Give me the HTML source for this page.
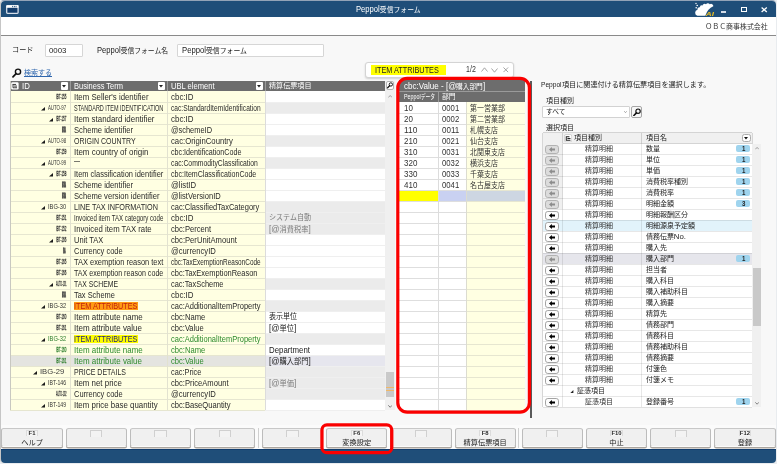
<!DOCTYPE html>
<html lang="ja"><head><meta charset="utf-8"><title>Peppol受信フォーム</title>
<style>
html,body{margin:0;padding:0}
body{width:777px;height:464px;position:relative;overflow:hidden;background:#e9ecef;font-family:"Liberation Sans","Noto Sans CJK JP",sans-serif;}
div,span.t,svg.a{position:absolute}
span.t{white-space:nowrap;display:block}
span.t b{font-weight:normal;font-size:112%}
#w{left:0;top:0;width:777px;height:464px;will-change:transform}
.win{left:0;top:0;width:776px;height:463px;background:#f8f8f8;border-radius:4px;box-sizing:border-box;border-left:1px solid #c6c6c6;border-top:1px solid #93a3b7}
</style></head>
<body>
<div id="w">
<div class="win"></div>
<div style="left:1px;top:0.5px;width:775px;height:16.5px;background:#1f4e79;border-radius:4px 4px 0 0;"></div>
<span class="t" style="left:356.1px;transform-origin:0 50%;top:4.9px;font-size:7.4px;line-height:10px;color:#fff;transform:scaleX(0.9245);"><b>Peppol</b>受信フォーム</span>
<svg class="a" style="left:6.2px;top:5.4px" width="12.8" height="9" viewBox="0 0 12.8 9"><rect x=".7" y=".7" width="11.4" height="7.6" rx=".8" fill="#123c6c" stroke="#d4dde8" stroke-width="1.3"/><rect x=".4" y=".3" width="12" height="2.5" fill="#fff"/><rect x="6.2" y=".9" width=".9" height="1.3" fill="#1f4e79"/><rect x="7.9" y=".9" width=".9" height="1.3" fill="#1f4e79"/><rect x="9.6" y=".9" width=".9" height="1.3" fill="#1f4e79"/></svg>
<svg class="a" style="left:694px;top:2px" width="22" height="15" viewBox="0 0 22 15"><path d="M3.4 13.7 A3.1 3.1 0 0 1 3.5 7.7 A2 2 0 0 1 5.9 5.3 A2 2 0 0 1 8.5 3.5 A2.3 2.3 0 0 1 12 2.2 A2.4 2.4 0 0 1 15.8 2.3 A2.2 2.2 0 0 1 19.3 4.2 Q13.6 6.6 11.3 13.7 Z" fill="#fff"/><circle cx="2" cy="1.5" r=".7" fill="#fff"/><circle cx="3.2" cy="3.5" r=".8" fill="#fff"/><circle cx="2.2" cy="5.7" r=".8" fill="#fff"/><text x="11.8" y="13.7" textLength="8.2" lengthAdjust="spacingAndGlyphs" font-family='"Liberation Sans",sans-serif' font-size="5.8" font-weight="bold" font-style="italic" fill="#f0c020">AI</text></svg>
<div style="left:721.4px;top:11.1px;width:4.4px;height:1.7px;background:#d4dde8;"></div>
<div style="left:741px;top:7.3px;width:6.2px;height:5.2px;border:1px solid #fff;border-top-width:1.8px;box-sizing:border-box;"></div>
<svg class="a" style="left:761.3px;top:7.4px" width="6.4" height="5.6" viewBox="0 0 6.4 5.6"><path d="M.6 .5 L5.8 5.1 M5.8 .5 L.6 5.1" stroke="#fff" stroke-width="1.3" fill="none"/></svg>
<div style="left:1px;top:17px;width:775px;height:18px;background:#fff;"></div>
<div style="left:1px;top:34.6px;width:775px;height:1px;background:#8a8a8a;"></div>
<span class="t" style="right:9px;transform-origin:100% 50%;top:22px;font-size:7.2px;line-height:10px;color:#333;transform:scaleX(0.9644);">ＯＢＣ商事株式会社</span>
<span class="t" style="left:12px;transform-origin:0 50%;top:45px;font-size:7.4px;line-height:10px;color:#222;transform:scaleX(0.9690);">コード</span>
<div style="left:45px;top:44.4px;width:38.2px;height:12.2px;background:#fff;border:1px solid #d6d6d6;box-sizing:border-box;border-radius:1px;"></div>
<span class="t" style="left:49px;transform-origin:0 50%;top:45.6px;font-size:7.6px;line-height:10px;color:#222;transform:scaleX(1.0351);">0003</span>
<span class="t" style="left:96.8px;transform-origin:0 50%;top:45.8px;font-size:7.4px;line-height:10px;color:#222;transform:scaleX(0.9189);"><b>Peppol</b>受信フォーム名</span>
<div style="left:177px;top:44.4px;width:146.6px;height:12.2px;background:#fff;border:1px solid #d6d6d6;box-sizing:border-box;border-radius:1px;"></div>
<span class="t" style="left:181.5px;transform-origin:0 50%;top:45.6px;font-size:7.4px;line-height:10px;color:#222;transform:scaleX(0.9302);"><b>Peppol</b>受信フォーム</span>
<svg class="a" style="left:11.5px;top:67.5px" width="10" height="10" viewBox="0 0 10 10"><circle cx="6" cy="3.7" r="2.6" fill="none" stroke="#111" stroke-width="1.4"/><path d="M4.1 5.7 L1 8.9" stroke="#111" stroke-width="1.7" stroke-linecap="round"/></svg>
<span class="t" style="left:24px;transform-origin:0 50%;top:67.6px;font-size:7.2px;line-height:10px;color:#2f66ad;text-decoration:underline;text-decoration-thickness:.6px;text-underline-offset:1px;transform:scaleX(0.9734);">検索する</span>
<div style="left:10.4px;top:91.3px;width:254.9px;height:319px;background:#ffffe2;"></div>
<div style="left:265.3px;top:91.3px;width:119.7px;height:319px;background:#fff;"></div>
<div style="left:10.4px;top:80.7px;width:374.6px;height:10.6px;background:#6d6d6d;"></div>
<div style="left:69.8px;top:80.7px;width:0.8px;height:10.6px;background:#9a9a9a;"></div>
<div style="left:167.3px;top:80.7px;width:0.8px;height:10.6px;background:#9a9a9a;"></div>
<div style="left:264.9px;top:80.7px;width:0.8px;height:10.6px;background:#9a9a9a;"></div>
<svg class="a" style="left:11.4px;top:82.2px" width="7.8" height="7.8" viewBox="0 0 8 8"><rect x=".2" y=".2" width="7.6" height="7.6" rx="1.4" fill="#fff"/><path d="M1.6 2.5h3.6M3.2 4.2h3M3.2 5.9h3M2.1 2.5v3.4h1.1" stroke="#333" stroke-width="1" fill="none"/></svg>
<span class="t" style="left:21.6px;transform-origin:0 50%;top:81.7px;font-size:8.2px;line-height:10px;color:#fff;transform:scaleX(0.9527);">ID</span>
<span class="t" style="left:74px;transform-origin:0 50%;top:81.7px;font-size:8.2px;line-height:10px;color:#fff;transform:scaleX(0.9151);">Business Term</span>
<span class="t" style="left:171.4px;transform-origin:0 50%;top:81.7px;font-size:8.2px;line-height:10px;color:#fff;transform:scaleX(0.9249);">UBL element</span>
<span class="t" style="left:268.7px;transform-origin:0 50%;top:81.4px;font-size:7.2px;line-height:10px;color:#fff;transform:scaleX(0.9852);">精算伝票項目</span>
<div style="left:60.6px;top:82.3px;width:7.2px;height:7.6px;background:#fff;border-radius:1px;"></div>
<svg class="a" style="left:62.2px;top:85px" width="4" height="2.6" viewBox="0 0 4 2.6"><path d="M0 0h4L2 2.6z" fill="#222"/></svg>
<div style="left:157.6px;top:82.3px;width:7.2px;height:7.6px;background:#fff;border-radius:1px;"></div>
<svg class="a" style="left:159.2px;top:85px" width="4" height="2.6" viewBox="0 0 4 2.6"><path d="M0 0h4L2 2.6z" fill="#222"/></svg>
<div style="left:255.8px;top:82.3px;width:7.2px;height:7.6px;background:#fff;border-radius:1px;"></div>
<svg class="a" style="left:257.4px;top:85px" width="4" height="2.6" viewBox="0 0 4 2.6"><path d="M0 0h4L2 2.6z" fill="#222"/></svg>
<span class="t" style="left:55.6px;transform-origin:0 50%;top:92.4px;font-size:8px;line-height:10px;color:#333;-webkit-text-stroke:.3px #333;transform:scaleX(0.3712);">IBT-155</span>
<span class="t" style="left:74.2px;transform-origin:0 50%;top:92.8px;font-size:8.2px;line-height:10px;color:#2a2a2a;transform:scaleX(0.9549);">Item Seller&#x27;s identifier</span>
<span class="t" style="left:171.4px;transform-origin:0 50%;top:92.8px;font-size:8.2px;line-height:10px;color:#2a2a2a;transform:scaleX(0.9690);">cbc:ID</span>
<div style="left:265.3px;top:102.3px;width:119.7px;height:11px;background:#ebebeb;"></div>
<span class="t" style="left:47.9px;transform-origin:0 50%;top:103.4px;font-size:8px;line-height:10px;color:#333;transform:scaleX(0.5380);">AUTO-97</span>
<svg class="a" style="left:40.9px;top:107.1px" width="4" height="3.6" viewBox="0 0 4 3.6"><path d="M4 0V3.6H0z" fill="#1a1a1a"/></svg>
<span class="t" style="left:74.2px;transform-origin:0 50%;top:103.8px;font-size:8.2px;line-height:10px;color:#2a2a2a;transform:scaleX(0.6715);">STANDARD ITEM IDENTIFICATION</span>
<span class="t" style="left:171.4px;transform-origin:0 50%;top:103.8px;font-size:8.2px;line-height:10px;color:#2a2a2a;transform:scaleX(0.8135);">cac:StandardItemIdentification</span>
<span class="t" style="left:55.6px;transform-origin:0 50%;top:114.4px;font-size:8px;line-height:10px;color:#333;-webkit-text-stroke:.3px #333;transform:scaleX(0.3712);">IBT-157</span>
<svg class="a" style="left:48.5px;top:118.1px" width="4" height="3.6" viewBox="0 0 4 3.6"><path d="M4 0V3.6H0z" fill="#1a1a1a"/></svg>
<span class="t" style="left:74.2px;transform-origin:0 50%;top:114.8px;font-size:8.2px;line-height:10px;color:#2a2a2a;transform:scaleX(0.9664);">Item standard identifier</span>
<span class="t" style="left:171.4px;transform-origin:0 50%;top:114.8px;font-size:8.2px;line-height:10px;color:#2a2a2a;transform:scaleX(0.9690);">cbc:ID</span>
<span class="t" style="left:62px;transform-origin:0 50%;top:125.4px;font-size:8px;line-height:10px;color:#333;font-weight:bold;-webkit-text-stroke:1.4px #444;transform:scaleX(0.1124);">IBT-157-1</span>
<span class="t" style="left:74.2px;transform-origin:0 50%;top:125.8px;font-size:8.2px;line-height:10px;color:#2a2a2a;transform:scaleX(0.9326);">Scheme identifier</span>
<span class="t" style="left:171.4px;transform-origin:0 50%;top:125.8px;font-size:8.2px;line-height:10px;color:#2a2a2a;transform:scaleX(0.9076);">@schemeID</span>
<div style="left:265.3px;top:135.3px;width:119.7px;height:11px;background:#ebebeb;"></div>
<span class="t" style="left:47.9px;transform-origin:0 50%;top:136.4px;font-size:8px;line-height:10px;color:#333;transform:scaleX(0.5380);">AUTO-98</span>
<svg class="a" style="left:40.9px;top:140.1px" width="4" height="3.6" viewBox="0 0 4 3.6"><path d="M4 0V3.6H0z" fill="#1a1a1a"/></svg>
<span class="t" style="left:74.2px;transform-origin:0 50%;top:136.8px;font-size:8.2px;line-height:10px;color:#2a2a2a;transform:scaleX(0.8587);">ORIGIN COUNTRY</span>
<span class="t" style="left:171.4px;transform-origin:0 50%;top:136.8px;font-size:8.2px;line-height:10px;color:#2a2a2a;transform:scaleX(0.9431);">cac:OriginCountry</span>
<span class="t" style="left:55.6px;transform-origin:0 50%;top:147.4px;font-size:8px;line-height:10px;color:#333;-webkit-text-stroke:.3px #333;transform:scaleX(0.3712);">IBT-159</span>
<span class="t" style="left:74.2px;transform-origin:0 50%;top:147.8px;font-size:8.2px;line-height:10px;color:#2a2a2a;transform:scaleX(0.9745);">Item country of origin</span>
<span class="t" style="left:171.4px;transform-origin:0 50%;top:147.8px;font-size:8.2px;line-height:10px;color:#2a2a2a;transform:scaleX(0.8739);">cbc:IdentificationCode</span>
<div style="left:265.3px;top:157.3px;width:119.7px;height:11px;background:#ebebeb;"></div>
<span class="t" style="left:47.9px;transform-origin:0 50%;top:158.4px;font-size:8px;line-height:10px;color:#333;transform:scaleX(0.5380);">AUTO-99</span>
<svg class="a" style="left:40.9px;top:162.1px" width="4" height="3.6" viewBox="0 0 4 3.6"><path d="M4 0V3.6H0z" fill="#1a1a1a"/></svg>
<span class="t" style="left:74.2px;transform-origin:0 50%;top:156.8px;font-size:8.2px;line-height:10px;color:#2a2a2a;transform:scaleX(0.7328);">—</span>
<span class="t" style="left:171.4px;transform-origin:0 50%;top:158.8px;font-size:8.2px;line-height:10px;color:#2a2a2a;transform:scaleX(0.8294);">cac:CommodityClassification</span>
<span class="t" style="left:55.6px;transform-origin:0 50%;top:169.4px;font-size:8px;line-height:10px;color:#333;-webkit-text-stroke:.3px #333;transform:scaleX(0.3712);">IBT-158</span>
<svg class="a" style="left:48.5px;top:173.1px" width="4" height="3.6" viewBox="0 0 4 3.6"><path d="M4 0V3.6H0z" fill="#1a1a1a"/></svg>
<span class="t" style="left:74.2px;transform-origin:0 50%;top:169.8px;font-size:8.2px;line-height:10px;color:#2a2a2a;transform:scaleX(0.9127);">Item classification identifier</span>
<span class="t" style="left:171.4px;transform-origin:0 50%;top:169.8px;font-size:8.2px;line-height:10px;color:#2a2a2a;transform:scaleX(0.8638);">cbc:ItemClassificationCode</span>
<span class="t" style="left:62px;transform-origin:0 50%;top:180.4px;font-size:8px;line-height:10px;color:#333;font-weight:bold;-webkit-text-stroke:1.4px #444;transform:scaleX(0.1124);">IBT-158-1</span>
<span class="t" style="left:74.2px;transform-origin:0 50%;top:180.8px;font-size:8.2px;line-height:10px;color:#2a2a2a;transform:scaleX(0.9326);">Scheme identifier</span>
<span class="t" style="left:171.4px;transform-origin:0 50%;top:180.8px;font-size:8.2px;line-height:10px;color:#2a2a2a;transform:scaleX(0.9428);">@listID</span>
<span class="t" style="left:62px;transform-origin:0 50%;top:191.4px;font-size:8px;line-height:10px;color:#333;font-weight:bold;-webkit-text-stroke:1.4px #444;transform:scaleX(0.1124);">IBT-158-2</span>
<span class="t" style="left:74.2px;transform-origin:0 50%;top:191.8px;font-size:8.2px;line-height:10px;color:#2a2a2a;transform:scaleX(0.9311);">Scheme version identifier</span>
<span class="t" style="left:171.4px;transform-origin:0 50%;top:191.8px;font-size:8.2px;line-height:10px;color:#2a2a2a;transform:scaleX(0.9233);">@listVersionID</span>
<div style="left:265.3px;top:201.3px;width:119.7px;height:11px;background:#ebebeb;"></div>
<span class="t" style="left:47.9px;transform-origin:0 50%;top:202.4px;font-size:8px;line-height:10px;color:#333;transform:scaleX(0.7142);">IBG-30</span>
<svg class="a" style="left:40.9px;top:206.1px" width="4" height="3.6" viewBox="0 0 4 3.6"><path d="M4 0V3.6H0z" fill="#1a1a1a"/></svg>
<span class="t" style="left:74.2px;transform-origin:0 50%;top:202.8px;font-size:8.2px;line-height:10px;color:#2a2a2a;transform:scaleX(0.8877);">LINE TAX INFORMATION</span>
<span class="t" style="left:171.4px;transform-origin:0 50%;top:202.8px;font-size:8.2px;line-height:10px;color:#2a2a2a;transform:scaleX(0.9152);">cac:ClassifiedTaxCategory</span>
<div style="left:265.3px;top:212.3px;width:119.7px;height:11px;background:#ebebeb;"></div>
<span class="t" style="left:55.6px;transform-origin:0 50%;top:213.4px;font-size:8px;line-height:10px;color:#333;-webkit-text-stroke:.3px #333;transform:scaleX(0.3712);">IBT-151</span>
<span class="t" style="left:74.2px;transform-origin:0 50%;top:213.8px;font-size:8.2px;line-height:10px;color:#2a2a2a;transform:scaleX(0.7480);">Invoiced item TAX category code</span>
<span class="t" style="left:171.4px;transform-origin:0 50%;top:213.8px;font-size:8.2px;line-height:10px;color:#2a2a2a;transform:scaleX(0.9690);">cbc:ID</span>
<span class="t" style="left:268.7px;transform-origin:0 50%;top:213px;font-size:7.5px;line-height:10px;color:#7c7c7c;transform:scaleX(0.9379);">システム自動</span>
<div style="left:265.3px;top:223.3px;width:119.7px;height:11px;background:#ebebeb;"></div>
<span class="t" style="left:55.6px;transform-origin:0 50%;top:224.4px;font-size:8px;line-height:10px;color:#333;-webkit-text-stroke:.3px #333;transform:scaleX(0.3712);">IBT-152</span>
<span class="t" style="left:74.2px;transform-origin:0 50%;top:224.8px;font-size:8.2px;line-height:10px;color:#2a2a2a;transform:scaleX(0.9456);">Invoiced item TAX rate</span>
<span class="t" style="left:171.4px;transform-origin:0 50%;top:224.8px;font-size:8.2px;line-height:10px;color:#2a2a2a;transform:scaleX(0.9298);">cbc:Percent</span>
<span class="t" style="left:268.7px;transform-origin:0 50%;top:224px;font-size:7.5px;line-height:10px;color:#7c7c7c;transform:scaleX(0.9659);"><b>[@</b>消費税率<b>]</b></span>
<span class="t" style="left:55.6px;transform-origin:0 50%;top:235.4px;font-size:8px;line-height:10px;color:#333;-webkit-text-stroke:.3px #333;transform:scaleX(0.3712);">IBT-166</span>
<svg class="a" style="left:48.5px;top:239.1px" width="4" height="3.6" viewBox="0 0 4 3.6"><path d="M4 0V3.6H0z" fill="#1a1a1a"/></svg>
<span class="t" style="left:74.2px;transform-origin:0 50%;top:235.8px;font-size:8.2px;line-height:10px;color:#2a2a2a;transform:scaleX(0.9121);">Unit TAX</span>
<span class="t" style="left:171.4px;transform-origin:0 50%;top:235.8px;font-size:8.2px;line-height:10px;color:#2a2a2a;transform:scaleX(0.9327);">cbc:PerUnitAmount</span>
<span class="t" style="left:63.4px;transform-origin:0 50%;top:246.4px;font-size:8px;line-height:10px;color:#333;font-weight:bold;-webkit-text-stroke:1.4px #444;transform:scaleX(0.0731);">IBT-166-1</span>
<span class="t" style="left:74.2px;transform-origin:0 50%;top:246.8px;font-size:8.2px;line-height:10px;color:#2a2a2a;transform:scaleX(0.9127);">Currency code</span>
<span class="t" style="left:171.4px;transform-origin:0 50%;top:246.8px;font-size:8.2px;line-height:10px;color:#2a2a2a;transform:scaleX(0.9352);">@currencyID</span>
<span class="t" style="left:55.6px;transform-origin:0 50%;top:257.4px;font-size:8px;line-height:10px;color:#333;-webkit-text-stroke:.3px #333;transform:scaleX(0.3712);">IBT-165</span>
<span class="t" style="left:74.2px;transform-origin:0 50%;top:257.8px;font-size:8.2px;line-height:10px;color:#2a2a2a;transform:scaleX(0.9098);">TAX exemption reason text</span>
<span class="t" style="left:171.4px;transform-origin:0 50%;top:257.8px;font-size:8.2px;line-height:10px;color:#2a2a2a;transform:scaleX(0.7844);">cbc:TaxExemptionReasonCode</span>
<span class="t" style="left:55.6px;transform-origin:0 50%;top:268.4px;font-size:8px;line-height:10px;color:#333;-webkit-text-stroke:.3px #333;transform:scaleX(0.3712);">IBT-166</span>
<span class="t" style="left:74.2px;transform-origin:0 50%;top:268.8px;font-size:8.2px;line-height:10px;color:#2a2a2a;transform:scaleX(0.8695);">TAX exemption reason code</span>
<span class="t" style="left:171.4px;transform-origin:0 50%;top:268.8px;font-size:8.2px;line-height:10px;color:#2a2a2a;transform:scaleX(0.9137);">cbc:TaxExemptionReason</span>
<div style="left:265.3px;top:278.3px;width:119.7px;height:11px;background:#ebebeb;"></div>
<span class="t" style="left:55.6px;transform-origin:0 50%;top:279.4px;font-size:8px;line-height:10px;color:#333;-webkit-text-stroke:.3px #333;transform:scaleX(0.2730);">AUTO-101</span>
<svg class="a" style="left:48.5px;top:283.1px" width="4" height="3.6" viewBox="0 0 4 3.6"><path d="M4 0V3.6H0z" fill="#1a1a1a"/></svg>
<span class="t" style="left:74.2px;transform-origin:0 50%;top:279.8px;font-size:8.2px;line-height:10px;color:#2a2a2a;transform:scaleX(0.8361);">TAX SCHEME</span>
<span class="t" style="left:171.4px;transform-origin:0 50%;top:279.8px;font-size:8.2px;line-height:10px;color:#2a2a2a;transform:scaleX(0.9084);">cac:TaxScheme</span>
<span class="t" style="left:62px;transform-origin:0 50%;top:290.4px;font-size:8px;line-height:10px;color:#333;font-weight:bold;-webkit-text-stroke:1.4px #444;transform:scaleX(0.1124);">IBT-167-1</span>
<span class="t" style="left:74.2px;transform-origin:0 50%;top:290.8px;font-size:8.2px;line-height:10px;color:#2a2a2a;transform:scaleX(0.9076);">Tax Scheme</span>
<span class="t" style="left:171.4px;transform-origin:0 50%;top:290.8px;font-size:8.2px;line-height:10px;color:#2a2a2a;transform:scaleX(0.9690);">cbc:ID</span>
<div style="left:265.3px;top:300.3px;width:119.7px;height:11px;background:#ebebeb;"></div>
<span class="t" style="left:47.9px;transform-origin:0 50%;top:301.4px;font-size:8px;line-height:10px;color:#333;transform:scaleX(0.7142);">IBG-32</span>
<svg class="a" style="left:40.9px;top:305.1px" width="4" height="3.6" viewBox="0 0 4 3.6"><path d="M4 0V3.6H0z" fill="#1a1a1a"/></svg>
<div style="left:74px;top:301.5px;width:63.6px;height:8.8px;background:#ff9a14;"></div>
<span class="t" style="left:74.2px;transform-origin:0 50%;top:301.8px;font-size:8.2px;line-height:10px;color:#c2200c;transform:scaleX(0.8838);">ITEM ATTRIBUTES</span>
<span class="t" style="left:171.4px;transform-origin:0 50%;top:301.8px;font-size:8.2px;line-height:10px;color:#2a2a2a;transform:scaleX(0.9157);">cac:AdditionalItemProperty</span>
<span class="t" style="left:55.6px;transform-origin:0 50%;top:312.4px;font-size:8px;line-height:10px;color:#333;-webkit-text-stroke:.3px #333;transform:scaleX(0.3712);">IBT-160</span>
<span class="t" style="left:74.2px;transform-origin:0 50%;top:312.8px;font-size:8.2px;line-height:10px;color:#2a2a2a;transform:scaleX(0.9752);">Item attribute name</span>
<span class="t" style="left:171.4px;transform-origin:0 50%;top:312.8px;font-size:8.2px;line-height:10px;color:#2a2a2a;transform:scaleX(0.9306);">cbc:Name</span>
<span class="t" style="left:268.7px;transform-origin:0 50%;top:312px;font-size:7.5px;line-height:10px;color:#222;transform:scaleX(0.9367);">表示単位</span>
<span class="t" style="left:55.6px;transform-origin:0 50%;top:323.4px;font-size:8px;line-height:10px;color:#333;-webkit-text-stroke:.3px #333;transform:scaleX(0.3712);">IBT-161</span>
<span class="t" style="left:74.2px;transform-origin:0 50%;top:323.8px;font-size:8.2px;line-height:10px;color:#2a2a2a;transform:scaleX(0.9764);">Item attribute value</span>
<span class="t" style="left:171.4px;transform-origin:0 50%;top:323.8px;font-size:8.2px;line-height:10px;color:#2a2a2a;transform:scaleX(0.9248);">cbc:Value</span>
<span class="t" style="left:268.7px;transform-origin:0 50%;top:323px;font-size:7.5px;line-height:10px;color:#222;transform:scaleX(0.9655);"><b>[@</b>単位<b>]</b></span>
<div style="left:265.3px;top:333.3px;width:119.7px;height:11px;background:#ebebeb;"></div>
<span class="t" style="left:47.9px;transform-origin:0 50%;top:334.4px;font-size:8px;line-height:10px;color:#2c7c2c;transform:scaleX(0.7142);">IBG-32</span>
<svg class="a" style="left:40.9px;top:338.1px" width="4" height="3.6" viewBox="0 0 4 3.6"><path d="M4 0V3.6H0z" fill="#1a1a1a"/></svg>
<div style="left:74px;top:334.5px;width:63.6px;height:8.8px;background:#ffff00;"></div>
<span class="t" style="left:74.2px;transform-origin:0 50%;top:334.8px;font-size:8.2px;line-height:10px;color:#1c1c80;transform:scaleX(0.8838);">ITEM ATTRIBUTES</span>
<span class="t" style="left:171.4px;transform-origin:0 50%;top:334.8px;font-size:8.2px;line-height:10px;color:#2e8b2e;transform:scaleX(0.9157);">cac:AdditionalItemProperty</span>
<span class="t" style="left:55.6px;transform-origin:0 50%;top:345.4px;font-size:8px;line-height:10px;color:#2c7c2c;-webkit-text-stroke:.3px #2c7c2c;transform:scaleX(0.3712);">IBT-160</span>
<span class="t" style="left:74.2px;transform-origin:0 50%;top:345.8px;font-size:8.2px;line-height:10px;color:#2e8b2e;transform:scaleX(0.9752);">Item attribute name</span>
<span class="t" style="left:171.4px;transform-origin:0 50%;top:345.8px;font-size:8.2px;line-height:10px;color:#2e8b2e;transform:scaleX(0.9306);">cbc:Name</span>
<span class="t" style="left:268.7px;transform-origin:0 50%;top:345.8px;font-size:8.2px;line-height:10px;color:#222;transform:scaleX(0.9584);">Department</span>
<div style="left:10.4px;top:355.3px;width:254.9px;height:11px;background:#e4e4e0;"></div>
<div style="left:265.3px;top:355.3px;width:119.7px;height:11px;background:#e6e6ee;"></div>
<span class="t" style="left:55.6px;transform-origin:0 50%;top:356.4px;font-size:8px;line-height:10px;color:#2c7c2c;-webkit-text-stroke:.3px #2c7c2c;transform:scaleX(0.3712);">IBT-161</span>
<span class="t" style="left:74.2px;transform-origin:0 50%;top:356.8px;font-size:8.2px;line-height:10px;color:#2e8b2e;transform:scaleX(0.9764);">Item attribute value</span>
<span class="t" style="left:171.4px;transform-origin:0 50%;top:356.8px;font-size:8.2px;line-height:10px;color:#2e8b2e;transform:scaleX(0.9248);">cbc:Value</span>
<span class="t" style="left:268.7px;transform-origin:0 50%;top:356px;font-size:7.5px;line-height:10px;color:#222;transform:scaleX(0.9659);"><b>[@</b>購入部門<b>]</b></span>
<div style="left:265.3px;top:366.3px;width:119.7px;height:11px;background:#ebebeb;"></div>
<span class="t" style="left:40px;transform-origin:0 50%;top:367.4px;font-size:8px;line-height:10px;color:#3a3a3a;transform:scaleX(0.9549);">IBG-29</span>
<svg class="a" style="left:33.1px;top:371.1px" width="4" height="3.6" viewBox="0 0 4 3.6"><path d="M4 0V3.6H0z" fill="#1a1a1a"/></svg>
<span class="t" style="left:74.2px;transform-origin:0 50%;top:367.8px;font-size:8.2px;line-height:10px;color:#2a2a2a;transform:scaleX(0.8549);">PRICE DETAILS</span>
<span class="t" style="left:171.4px;transform-origin:0 50%;top:367.8px;font-size:8.2px;line-height:10px;color:#2a2a2a;transform:scaleX(0.8999);">cac:Price</span>
<div style="left:265.3px;top:377.3px;width:119.7px;height:11px;background:#ebebeb;"></div>
<span class="t" style="left:47.9px;transform-origin:0 50%;top:378.4px;font-size:8px;line-height:10px;color:#333;transform:scaleX(0.6461);">IBT-146</span>
<svg class="a" style="left:40.9px;top:382.1px" width="4" height="3.6" viewBox="0 0 4 3.6"><path d="M4 0V3.6H0z" fill="#1a1a1a"/></svg>
<span class="t" style="left:74.2px;transform-origin:0 50%;top:378.8px;font-size:8.2px;line-height:10px;color:#2a2a2a;transform:scaleX(0.9655);">Item net price</span>
<span class="t" style="left:171.4px;transform-origin:0 50%;top:378.8px;font-size:8.2px;line-height:10px;color:#2a2a2a;transform:scaleX(0.9291);">cbc:PriceAmount</span>
<span class="t" style="left:268.7px;transform-origin:0 50%;top:378px;font-size:7.5px;line-height:10px;color:#7c7c7c;transform:scaleX(0.9655);"><b>[@</b>単価<b>]</b></span>
<div style="left:265.3px;top:388.3px;width:119.7px;height:11px;background:#ebebeb;"></div>
<span class="t" style="left:55.6px;transform-origin:0 50%;top:389.4px;font-size:8px;line-height:10px;color:#333;-webkit-text-stroke:.3px #333;transform:scaleX(0.2730);">AUTO-102</span>
<span class="t" style="left:74.2px;transform-origin:0 50%;top:389.8px;font-size:8.2px;line-height:10px;color:#2a2a2a;transform:scaleX(0.9127);">Currency code</span>
<span class="t" style="left:171.4px;transform-origin:0 50%;top:389.8px;font-size:8.2px;line-height:10px;color:#2a2a2a;transform:scaleX(0.9352);">@currencyID</span>
<span class="t" style="left:47.9px;transform-origin:0 50%;top:400.4px;font-size:8px;line-height:10px;color:#333;transform:scaleX(0.6461);">IBT-149</span>
<svg class="a" style="left:40.9px;top:404.1px" width="4" height="3.6" viewBox="0 0 4 3.6"><path d="M4 0V3.6H0z" fill="#1a1a1a"/></svg>
<span class="t" style="left:74.2px;transform-origin:0 50%;top:400.8px;font-size:8.2px;line-height:10px;color:#2a2a2a;transform:scaleX(0.9616);">Item price base quantity</span>
<span class="t" style="left:171.4px;transform-origin:0 50%;top:400.8px;font-size:8.2px;line-height:10px;color:#2a2a2a;transform:scaleX(0.9288);">cbc:BaseQuantity</span>
<div style="left:10.4px;top:101.8px;width:254.9px;height:1px;background:#e6e6d0;"></div>
<div style="left:265.3px;top:101.8px;width:119.7px;height:1px;background:#efefef;"></div>
<div style="left:10.4px;top:112.8px;width:254.9px;height:1px;background:#e6e6d0;"></div>
<div style="left:265.3px;top:112.8px;width:119.7px;height:1px;background:#efefef;"></div>
<div style="left:10.4px;top:123.8px;width:254.9px;height:1px;background:#e6e6d0;"></div>
<div style="left:265.3px;top:123.8px;width:119.7px;height:1px;background:#efefef;"></div>
<div style="left:10.4px;top:134.8px;width:254.9px;height:1px;background:#e6e6d0;"></div>
<div style="left:265.3px;top:134.8px;width:119.7px;height:1px;background:#efefef;"></div>
<div style="left:10.4px;top:145.8px;width:254.9px;height:1px;background:#e6e6d0;"></div>
<div style="left:265.3px;top:145.8px;width:119.7px;height:1px;background:#efefef;"></div>
<div style="left:10.4px;top:156.8px;width:254.9px;height:1px;background:#e6e6d0;"></div>
<div style="left:265.3px;top:156.8px;width:119.7px;height:1px;background:#efefef;"></div>
<div style="left:10.4px;top:167.8px;width:254.9px;height:1px;background:#e6e6d0;"></div>
<div style="left:265.3px;top:167.8px;width:119.7px;height:1px;background:#efefef;"></div>
<div style="left:10.4px;top:178.8px;width:254.9px;height:1px;background:#e6e6d0;"></div>
<div style="left:265.3px;top:178.8px;width:119.7px;height:1px;background:#efefef;"></div>
<div style="left:10.4px;top:189.8px;width:254.9px;height:1px;background:#e6e6d0;"></div>
<div style="left:265.3px;top:189.8px;width:119.7px;height:1px;background:#efefef;"></div>
<div style="left:10.4px;top:200.8px;width:254.9px;height:1px;background:#e6e6d0;"></div>
<div style="left:265.3px;top:200.8px;width:119.7px;height:1px;background:#efefef;"></div>
<div style="left:10.4px;top:211.8px;width:254.9px;height:1px;background:#e6e6d0;"></div>
<div style="left:265.3px;top:211.8px;width:119.7px;height:1px;background:#efefef;"></div>
<div style="left:10.4px;top:222.8px;width:254.9px;height:1px;background:#e6e6d0;"></div>
<div style="left:265.3px;top:222.8px;width:119.7px;height:1px;background:#efefef;"></div>
<div style="left:10.4px;top:233.8px;width:254.9px;height:1px;background:#e6e6d0;"></div>
<div style="left:265.3px;top:233.8px;width:119.7px;height:1px;background:#efefef;"></div>
<div style="left:10.4px;top:244.8px;width:254.9px;height:1px;background:#e6e6d0;"></div>
<div style="left:265.3px;top:244.8px;width:119.7px;height:1px;background:#efefef;"></div>
<div style="left:10.4px;top:255.8px;width:254.9px;height:1px;background:#e6e6d0;"></div>
<div style="left:265.3px;top:255.8px;width:119.7px;height:1px;background:#efefef;"></div>
<div style="left:10.4px;top:266.8px;width:254.9px;height:1px;background:#e6e6d0;"></div>
<div style="left:265.3px;top:266.8px;width:119.7px;height:1px;background:#efefef;"></div>
<div style="left:10.4px;top:277.8px;width:254.9px;height:1px;background:#e6e6d0;"></div>
<div style="left:265.3px;top:277.8px;width:119.7px;height:1px;background:#efefef;"></div>
<div style="left:10.4px;top:288.8px;width:254.9px;height:1px;background:#e6e6d0;"></div>
<div style="left:265.3px;top:288.8px;width:119.7px;height:1px;background:#efefef;"></div>
<div style="left:10.4px;top:299.8px;width:254.9px;height:1px;background:#e6e6d0;"></div>
<div style="left:265.3px;top:299.8px;width:119.7px;height:1px;background:#efefef;"></div>
<div style="left:10.4px;top:310.8px;width:254.9px;height:1px;background:#e6e6d0;"></div>
<div style="left:265.3px;top:310.8px;width:119.7px;height:1px;background:#efefef;"></div>
<div style="left:10.4px;top:321.8px;width:254.9px;height:1px;background:#e6e6d0;"></div>
<div style="left:265.3px;top:321.8px;width:119.7px;height:1px;background:#efefef;"></div>
<div style="left:10.4px;top:332.8px;width:254.9px;height:1px;background:#e6e6d0;"></div>
<div style="left:265.3px;top:332.8px;width:119.7px;height:1px;background:#efefef;"></div>
<div style="left:10.4px;top:343.8px;width:254.9px;height:1px;background:#e6e6d0;"></div>
<div style="left:265.3px;top:343.8px;width:119.7px;height:1px;background:#efefef;"></div>
<div style="left:10.4px;top:354.8px;width:254.9px;height:1px;background:#e6e6d0;"></div>
<div style="left:265.3px;top:354.8px;width:119.7px;height:1px;background:#efefef;"></div>
<div style="left:10.4px;top:365.8px;width:254.9px;height:1px;background:#e6e6d0;"></div>
<div style="left:265.3px;top:365.8px;width:119.7px;height:1px;background:#efefef;"></div>
<div style="left:10.4px;top:376.8px;width:254.9px;height:1px;background:#e6e6d0;"></div>
<div style="left:265.3px;top:376.8px;width:119.7px;height:1px;background:#efefef;"></div>
<div style="left:10.4px;top:387.8px;width:254.9px;height:1px;background:#e6e6d0;"></div>
<div style="left:265.3px;top:387.8px;width:119.7px;height:1px;background:#efefef;"></div>
<div style="left:10.4px;top:398.8px;width:254.9px;height:1px;background:#e6e6d0;"></div>
<div style="left:265.3px;top:398.8px;width:119.7px;height:1px;background:#efefef;"></div>
<div style="left:10.4px;top:409.8px;width:254.9px;height:1px;background:#e6e6d0;"></div>
<div style="left:265.3px;top:409.8px;width:119.7px;height:1px;background:#efefef;"></div>
<div style="left:69.7px;top:91.3px;width:1px;height:319px;background:#e2e2d0;"></div>
<div style="left:167.2px;top:91.3px;width:1px;height:319px;background:#e2e2d0;"></div>
<div style="left:264.8px;top:91.3px;width:1px;height:319px;background:#dcdcdc;"></div>
<div style="left:9.9px;top:80.7px;width:1px;height:329.6px;background:#c8c8c0;"></div>
<div style="left:385px;top:80.7px;width:10px;height:329.6px;background:#f0f0f0;"></div>
<div style="left:386px;top:81.1px;width:8.4px;height:8.5px;background:#fff;border:.8px solid #b4b4b4;box-sizing:border-box;border-radius:2px;"></div>
<svg class="a" style="left:387.1px;top:82.1px" width="6.4" height="6.6" viewBox="0 0 10 10"><circle cx="6" cy="3.7" r="2.6" fill="none" stroke="#111" stroke-width="1.5"/><path d="M4.1 5.7 L1 8.9" stroke="#111" stroke-width="1.9" stroke-linecap="round"/></svg>
<svg class="a" style="left:387.6px;top:95px" width="4.4" height="2.8" viewBox="0 0 4.4 2.8"><path d="M.3 2.5L2.2.5 4.1 2.5" stroke="#8a8a8a" stroke-width=".8" fill="none"/></svg>
<svg class="a" style="left:387.6px;top:405.2px" width="4.4" height="2.8" viewBox="0 0 4.4 2.8"><path d="M.3 .3L2.2 2.3 4.1 .3" stroke="#6c6c6c" stroke-width=".9" fill="none"/></svg>
<div style="left:385.5px;top:371.9px;width:8.4px;height:24.8px;background:#c9c9c9;"></div>
<div style="left:385.5px;top:387px;width:8.4px;height:0.9px;background:#f0b868;"></div>
<div style="left:385.5px;top:389.9px;width:8.4px;height:0.9px;background:#f0b868;"></div>
<div style="left:365.1px;top:62.4px;width:149.4px;height:15.6px;background:#fff;border:1px solid #d4d4d4;box-sizing:border-box;border-radius:3px;box-shadow:0 1px 2px rgba(0,0,0,.16);"></div>
<div style="left:371px;top:64.8px;width:75px;height:10.6px;background:#ffff00;"></div>
<span class="t" style="left:374.6px;transform-origin:0 50%;top:65.4px;font-size:8.5px;line-height:10px;color:#222;transform:scaleX(0.8567);">ITEM ATTRIBUTES</span>
<span class="t" style="left:465.8px;transform-origin:0 50%;top:65.4px;font-size:8.2px;line-height:10px;color:#333;transform:scaleX(0.8604);">1/2</span>
<svg class="a" style="left:480.6px;top:67.4px" width="7" height="5" viewBox="0 0 7 5"><path d="M.5 4.5L3.5 .8 6.5 4.5" stroke="#9a9a9a" stroke-width=".9" fill="none"/></svg>
<svg class="a" style="left:490.8px;top:67.8px" width="7" height="5" viewBox="0 0 7 5"><path d="M.5 .5L3.5 4.2 6.5 .5" stroke="#9a9a9a" stroke-width=".9" fill="none"/></svg>
<svg class="a" style="left:503px;top:67.4px" width="5.6" height="5.6" viewBox="0 0 5.6 5.6"><path d="M.5 .5L5.1 5.1M5.1 .5L.5 5.1" stroke="#9a9a9a" stroke-width=".9" fill="none"/></svg>
<div style="left:399.2px;top:102.3px;width:67.1px;height:308px;background:#fff;"></div>
<div style="left:466.3px;top:102.3px;width:59.1px;height:308px;background:#ffffe2;"></div>
<div style="left:399.2px;top:80px;width:126.2px;height:22.3px;background:#6d6d6d;"></div>
<div style="left:399.2px;top:91.1px;width:126.2px;height:0.8px;background:#9a9a9a;"></div>
<div style="left:438px;top:91.5px;width:0.8px;height:10.8px;background:#9a9a9a;"></div>
<span class="t" style="left:404.2px;transform-origin:0 50%;top:81.8px;font-size:8.2px;line-height:10px;color:#fff;transform:scaleX(0.9846);">cbc:Value - [@</span>
<span class="t" style="left:455.8px;transform-origin:0 50%;top:81.6px;font-size:7.4px;line-height:10px;color:#fff;transform:scaleX(0.9061);">購入部門</span>
<span class="t" style="left:483px;transform-origin:0 50%;top:81.8px;font-size:8.2px;line-height:10px;color:#fff;transform:scaleX(0.9644);">]</span>
<span class="t" style="left:403.6px;transform-origin:0 50%;top:92.2px;font-size:7.2px;line-height:10px;color:#fff;transform:scaleX(0.6647);"><b>Peppol</b>データ</span>
<span class="t" style="left:442.2px;transform-origin:0 50%;top:92.2px;font-size:7.2px;line-height:10px;color:#fff;transform:scaleX(0.9451);">部門</span>
<span class="t" style="left:404.4px;transform-origin:0 50%;top:103.4px;font-size:8.4px;line-height:10px;color:#333;transform:scaleX(0.9541);">10</span>
<span class="t" style="left:442px;transform-origin:0 50%;top:103.4px;font-size:8.4px;line-height:10px;color:#333;transform:scaleX(0.9227);">0001</span>
<span class="t" style="left:470.3px;transform-origin:0 50%;top:104.1px;font-size:7.6px;line-height:10px;color:#333;transform:scaleX(0.9218);">第一営業部</span>
<span class="t" style="left:404.4px;transform-origin:0 50%;top:114.4px;font-size:8.4px;line-height:10px;color:#333;transform:scaleX(0.9541);">20</span>
<span class="t" style="left:442px;transform-origin:0 50%;top:114.4px;font-size:8.4px;line-height:10px;color:#333;transform:scaleX(0.9227);">0002</span>
<span class="t" style="left:470.3px;transform-origin:0 50%;top:115.1px;font-size:7.6px;line-height:10px;color:#333;transform:scaleX(0.9218);">第二営業部</span>
<span class="t" style="left:404.4px;transform-origin:0 50%;top:125.4px;font-size:8.4px;line-height:10px;color:#333;transform:scaleX(0.9993);">110</span>
<span class="t" style="left:442px;transform-origin:0 50%;top:125.4px;font-size:8.4px;line-height:10px;color:#333;transform:scaleX(0.9547);">0011</span>
<span class="t" style="left:470.3px;transform-origin:0 50%;top:126.1px;font-size:7.6px;line-height:10px;color:#333;transform:scaleX(0.9218);">札幌支店</span>
<span class="t" style="left:404.4px;transform-origin:0 50%;top:136.4px;font-size:8.4px;line-height:10px;color:#333;transform:scaleX(0.9546);">210</span>
<span class="t" style="left:442px;transform-origin:0 50%;top:136.4px;font-size:8.4px;line-height:10px;color:#333;transform:scaleX(0.9227);">0021</span>
<span class="t" style="left:470.3px;transform-origin:0 50%;top:137.1px;font-size:7.6px;line-height:10px;color:#333;transform:scaleX(0.9218);">仙台支店</span>
<span class="t" style="left:404.4px;transform-origin:0 50%;top:147.4px;font-size:8.4px;line-height:10px;color:#333;transform:scaleX(0.9546);">310</span>
<span class="t" style="left:442px;transform-origin:0 50%;top:147.4px;font-size:8.4px;line-height:10px;color:#333;transform:scaleX(0.9227);">0031</span>
<span class="t" style="left:470.3px;transform-origin:0 50%;top:148.1px;font-size:7.6px;line-height:10px;color:#333;transform:scaleX(0.9218);">北関東支店</span>
<span class="t" style="left:404.4px;transform-origin:0 50%;top:158.4px;font-size:8.4px;line-height:10px;color:#333;transform:scaleX(0.9546);">320</span>
<span class="t" style="left:442px;transform-origin:0 50%;top:158.4px;font-size:8.4px;line-height:10px;color:#333;transform:scaleX(0.9227);">0032</span>
<span class="t" style="left:470.3px;transform-origin:0 50%;top:159.1px;font-size:7.6px;line-height:10px;color:#333;transform:scaleX(0.9218);">横浜支店</span>
<span class="t" style="left:404.4px;transform-origin:0 50%;top:169.4px;font-size:8.4px;line-height:10px;color:#333;transform:scaleX(0.9546);">330</span>
<span class="t" style="left:442px;transform-origin:0 50%;top:169.4px;font-size:8.4px;line-height:10px;color:#333;transform:scaleX(0.9227);">0033</span>
<span class="t" style="left:470.3px;transform-origin:0 50%;top:170.1px;font-size:7.6px;line-height:10px;color:#333;transform:scaleX(0.9218);">千葉支店</span>
<span class="t" style="left:404.4px;transform-origin:0 50%;top:180.4px;font-size:8.4px;line-height:10px;color:#333;transform:scaleX(0.9546);">410</span>
<span class="t" style="left:442px;transform-origin:0 50%;top:180.4px;font-size:8.4px;line-height:10px;color:#333;transform:scaleX(0.9227);">0041</span>
<span class="t" style="left:470.3px;transform-origin:0 50%;top:181.1px;font-size:7.6px;line-height:10px;color:#333;transform:scaleX(0.9218);">名古屋支店</span>
<div style="left:399.2px;top:190.3px;width:39.2px;height:11px;background:#ffff00;"></div>
<div style="left:438.4px;top:190.3px;width:27.9px;height:11px;background:#c9d1f1;"></div>
<div style="left:466.3px;top:190.3px;width:59.1px;height:11px;background:#cdd6e2;"></div>
<div style="left:399.2px;top:112.8px;width:67.1px;height:1px;background:#dedede;"></div>
<div style="left:466.3px;top:112.8px;width:59.1px;height:1px;background:#e6e6d0;"></div>
<div style="left:399.2px;top:123.8px;width:67.1px;height:1px;background:#dedede;"></div>
<div style="left:466.3px;top:123.8px;width:59.1px;height:1px;background:#e6e6d0;"></div>
<div style="left:399.2px;top:134.8px;width:67.1px;height:1px;background:#dedede;"></div>
<div style="left:466.3px;top:134.8px;width:59.1px;height:1px;background:#e6e6d0;"></div>
<div style="left:399.2px;top:145.8px;width:67.1px;height:1px;background:#dedede;"></div>
<div style="left:466.3px;top:145.8px;width:59.1px;height:1px;background:#e6e6d0;"></div>
<div style="left:399.2px;top:156.8px;width:67.1px;height:1px;background:#dedede;"></div>
<div style="left:466.3px;top:156.8px;width:59.1px;height:1px;background:#e6e6d0;"></div>
<div style="left:399.2px;top:167.8px;width:67.1px;height:1px;background:#dedede;"></div>
<div style="left:466.3px;top:167.8px;width:59.1px;height:1px;background:#e6e6d0;"></div>
<div style="left:399.2px;top:178.8px;width:67.1px;height:1px;background:#dedede;"></div>
<div style="left:466.3px;top:178.8px;width:59.1px;height:1px;background:#e6e6d0;"></div>
<div style="left:399.2px;top:189.8px;width:67.1px;height:1px;background:#dedede;"></div>
<div style="left:466.3px;top:189.8px;width:59.1px;height:1px;background:#e6e6d0;"></div>
<div style="left:399.2px;top:200.8px;width:67.1px;height:1px;background:#dedede;"></div>
<div style="left:466.3px;top:200.8px;width:59.1px;height:1px;background:#e6e6d0;"></div>
<div style="left:399.2px;top:211.8px;width:67.1px;height:1px;background:#dedede;"></div>
<div style="left:466.3px;top:211.8px;width:59.1px;height:1px;background:#e6e6d0;"></div>
<div style="left:399.2px;top:222.8px;width:67.1px;height:1px;background:#dedede;"></div>
<div style="left:466.3px;top:222.8px;width:59.1px;height:1px;background:#e6e6d0;"></div>
<div style="left:399.2px;top:233.8px;width:67.1px;height:1px;background:#dedede;"></div>
<div style="left:466.3px;top:233.8px;width:59.1px;height:1px;background:#e6e6d0;"></div>
<div style="left:399.2px;top:244.8px;width:67.1px;height:1px;background:#dedede;"></div>
<div style="left:466.3px;top:244.8px;width:59.1px;height:1px;background:#e6e6d0;"></div>
<div style="left:399.2px;top:255.8px;width:67.1px;height:1px;background:#dedede;"></div>
<div style="left:466.3px;top:255.8px;width:59.1px;height:1px;background:#e6e6d0;"></div>
<div style="left:399.2px;top:266.8px;width:67.1px;height:1px;background:#dedede;"></div>
<div style="left:466.3px;top:266.8px;width:59.1px;height:1px;background:#e6e6d0;"></div>
<div style="left:399.2px;top:277.8px;width:67.1px;height:1px;background:#dedede;"></div>
<div style="left:466.3px;top:277.8px;width:59.1px;height:1px;background:#e6e6d0;"></div>
<div style="left:399.2px;top:288.8px;width:67.1px;height:1px;background:#dedede;"></div>
<div style="left:466.3px;top:288.8px;width:59.1px;height:1px;background:#e6e6d0;"></div>
<div style="left:399.2px;top:299.8px;width:67.1px;height:1px;background:#dedede;"></div>
<div style="left:466.3px;top:299.8px;width:59.1px;height:1px;background:#e6e6d0;"></div>
<div style="left:399.2px;top:310.8px;width:67.1px;height:1px;background:#dedede;"></div>
<div style="left:466.3px;top:310.8px;width:59.1px;height:1px;background:#e6e6d0;"></div>
<div style="left:399.2px;top:321.8px;width:67.1px;height:1px;background:#dedede;"></div>
<div style="left:466.3px;top:321.8px;width:59.1px;height:1px;background:#e6e6d0;"></div>
<div style="left:399.2px;top:332.8px;width:67.1px;height:1px;background:#dedede;"></div>
<div style="left:466.3px;top:332.8px;width:59.1px;height:1px;background:#e6e6d0;"></div>
<div style="left:399.2px;top:343.8px;width:67.1px;height:1px;background:#dedede;"></div>
<div style="left:466.3px;top:343.8px;width:59.1px;height:1px;background:#e6e6d0;"></div>
<div style="left:399.2px;top:354.8px;width:67.1px;height:1px;background:#dedede;"></div>
<div style="left:466.3px;top:354.8px;width:59.1px;height:1px;background:#e6e6d0;"></div>
<div style="left:399.2px;top:365.8px;width:67.1px;height:1px;background:#dedede;"></div>
<div style="left:466.3px;top:365.8px;width:59.1px;height:1px;background:#e6e6d0;"></div>
<div style="left:399.2px;top:376.8px;width:67.1px;height:1px;background:#dedede;"></div>
<div style="left:466.3px;top:376.8px;width:59.1px;height:1px;background:#e6e6d0;"></div>
<div style="left:399.2px;top:387.8px;width:67.1px;height:1px;background:#dedede;"></div>
<div style="left:466.3px;top:387.8px;width:59.1px;height:1px;background:#e6e6d0;"></div>
<div style="left:399.2px;top:398.8px;width:67.1px;height:1px;background:#dedede;"></div>
<div style="left:466.3px;top:398.8px;width:59.1px;height:1px;background:#e6e6d0;"></div>
<div style="left:399.2px;top:409.8px;width:67.1px;height:1px;background:#dedede;"></div>
<div style="left:466.3px;top:409.8px;width:59.1px;height:1px;background:#e6e6d0;"></div>
<div style="left:437.9px;top:102.3px;width:1px;height:308px;background:#dcdcdc;"></div>
<div style="left:465.8px;top:102.3px;width:1px;height:308px;background:#dcdcd0;"></div>
<div style="left:530.2px;top:80.7px;width:1.6px;height:337px;background:#5a5a5a;"></div>
<svg class="a" style="left:390px;top:70px" width="150" height="350" viewBox="390 70 150 350"><rect x="397.8" y="78.4" width="131.6" height="333.7" rx="9.4" fill="none" stroke="#fa0000" stroke-width="3.2"/></svg>
<span class="t" style="left:541px;transform-origin:0 50%;top:80.2px;font-size:7.9px;line-height:10px;color:#222;transform:scaleX(0.8381);">Peppol</span>
<span class="t" style="left:562px;transform-origin:0 50%;top:80px;font-size:7.2px;line-height:10px;color:#222;transform:scaleX(0.9878);">項目に関連付ける精算伝票項目を選択します。</span>
<span class="t" style="left:546px;transform-origin:0 50%;top:96.2px;font-size:7.2px;line-height:10px;color:#222;transform:scaleX(0.9734);">項目種別</span>
<div style="left:542px;top:106px;width:87.6px;height:11.9px;background:#fff;border:1px solid #d2d2d2;box-sizing:border-box;border-radius:1px;"></div>
<span class="t" style="left:546px;transform-origin:0 50%;top:107px;font-size:7.2px;line-height:10px;color:#222;transform:scaleX(0.9383);">すべて</span>
<svg class="a" style="left:623.8px;top:111px" width="3" height="2" viewBox="0 0 3 2"><path d="M.2 .3L1.5 1.6 2.8 .3" stroke="#777" stroke-width=".7" fill="none"/></svg>
<div style="left:630.9px;top:106.1px;width:11.2px;height:11.9px;background:#f7f7f7;border:1px solid #a6a6a6;box-sizing:border-box;border-radius:2px;"></div>
<svg class="a" style="left:632.6px;top:107.6px" width="8.4" height="8.6" viewBox="0 0 10 10"><circle cx="6" cy="3.7" r="2.6" fill="none" stroke="#111" stroke-width="1.4"/><path d="M4.1 5.7 L1 8.9" stroke="#111" stroke-width="1.8" stroke-linecap="round"/></svg>
<span class="t" style="left:546px;transform-origin:0 50%;top:122.7px;font-size:7.2px;line-height:10px;color:#222;transform:scaleX(0.9734);">選択項目</span>
<div style="left:542.7px;top:143.4px;width:209.3px;height:264px;background:#fff;"></div>
<div style="left:542.7px;top:132.7px;width:209.3px;height:10.7px;background:#f0f0f0;"></div>
<div style="left:542.7px;top:132.2px;width:209.3px;height:1px;background:#d4d4d4;"></div>
<div style="left:542.7px;top:142.9px;width:209.3px;height:1px;background:#d4d4d4;"></div>
<div style="left:562.4px;top:132.7px;width:1px;height:10.7px;background:#cfcfcf;"></div>
<div style="left:641.4px;top:132.7px;width:1px;height:10.7px;background:#cfcfcf;"></div>
<svg class="a" style="left:563.6px;top:134px" width="8.2" height="8.4" viewBox="0 0 8 8"><rect x=".4" y=".4" width="7.2" height="7.2" rx="1.6" fill="#fff" stroke="#bbb" stroke-width=".6"/><path d="M1.7 2.5h3.6M3.3 4.2h3M3.3 5.9h3M2.2 2.5v3.4h1.1" stroke="#222" stroke-width="1" fill="none"/></svg>
<span class="t" style="left:573.6px;transform-origin:0 50%;top:133.3px;font-size:7.2px;line-height:10px;color:#222;transform:scaleX(0.9734);">項目種別</span>
<span class="t" style="left:646px;transform-origin:0 50%;top:133.3px;font-size:7.2px;line-height:10px;color:#222;transform:scaleX(0.9732);">項目名</span>
<div style="left:741.7px;top:134.2px;width:9px;height:8.2px;background:#fff;border-radius:1px;border:1px solid #adadad;box-sizing:border-box;border-radius:2.4px;"></div>
<svg class="a" style="left:744.2px;top:137.2px" width="4" height="2.6" viewBox="0 0 4 2.6"><path d="M0 0h4L2 2.6z" fill="#111"/></svg>
<div style="left:542.7px;top:143.4px;width:20.2px;height:11px;background:#f0f0f0;"></div>
<div style="left:545.4px;top:144.6px;width:13.6px;height:9px;background:#dcdcdc;border:1.1px solid #b2b2b2;box-sizing:border-box;border-radius:2.8px;"></div>
<svg class="a" style="left:548.9px;top:146.5px" width="6.6" height="5" viewBox="0 0 6.6 5"><path d="M0 2.5L2.9 0V1.6H6.6V3.4H2.9V5z" fill="#8c8c8c"/></svg>
<span class="t" style="left:585px;transform-origin:0 50%;top:144px;font-size:7.2px;line-height:10px;color:#333;transform:scaleX(0.9734);">精算明細</span>
<span class="t" style="left:646px;transform-origin:0 50%;top:144px;font-size:7.2px;line-height:10px;color:#222;transform:scaleX(0.9729);">数量</span>
<div style="left:736.4px;top:145.4px;width:13.8px;height:7.1px;background:#9fd4ee;border-radius:2px;"></div>
<span class="t" style="left:741.7px;transform-origin:0 50%;top:144.2px;font-size:6.8px;line-height:10px;color:#222;font-weight:bold;transform:scaleX(0.8992);">1</span>
<div style="left:542.7px;top:154.4px;width:20.2px;height:11px;background:#f0f0f0;"></div>
<div style="left:545.4px;top:155.6px;width:13.6px;height:9px;background:#dcdcdc;border:1.1px solid #b2b2b2;box-sizing:border-box;border-radius:2.8px;"></div>
<svg class="a" style="left:548.9px;top:157.5px" width="6.6" height="5" viewBox="0 0 6.6 5"><path d="M0 2.5L2.9 0V1.6H6.6V3.4H2.9V5z" fill="#8c8c8c"/></svg>
<span class="t" style="left:585px;transform-origin:0 50%;top:155px;font-size:7.2px;line-height:10px;color:#333;transform:scaleX(0.9734);">精算明細</span>
<span class="t" style="left:646px;transform-origin:0 50%;top:155px;font-size:7.2px;line-height:10px;color:#222;transform:scaleX(0.9729);">単位</span>
<div style="left:736.4px;top:156.4px;width:13.8px;height:7.1px;background:#9fd4ee;border-radius:2px;"></div>
<span class="t" style="left:741.7px;transform-origin:0 50%;top:155.2px;font-size:6.8px;line-height:10px;color:#222;font-weight:bold;transform:scaleX(0.8992);">1</span>
<div style="left:542.7px;top:165.4px;width:20.2px;height:11px;background:#f0f0f0;"></div>
<div style="left:545.4px;top:166.6px;width:13.6px;height:9px;background:#dcdcdc;border:1.1px solid #b2b2b2;box-sizing:border-box;border-radius:2.8px;"></div>
<svg class="a" style="left:548.9px;top:168.5px" width="6.6" height="5" viewBox="0 0 6.6 5"><path d="M0 2.5L2.9 0V1.6H6.6V3.4H2.9V5z" fill="#8c8c8c"/></svg>
<span class="t" style="left:585px;transform-origin:0 50%;top:166px;font-size:7.2px;line-height:10px;color:#333;transform:scaleX(0.9734);">精算明細</span>
<span class="t" style="left:646px;transform-origin:0 50%;top:166px;font-size:7.2px;line-height:10px;color:#222;transform:scaleX(0.9729);">単価</span>
<div style="left:736.4px;top:167.4px;width:13.8px;height:7.1px;background:#9fd4ee;border-radius:2px;"></div>
<span class="t" style="left:741.7px;transform-origin:0 50%;top:166.2px;font-size:6.8px;line-height:10px;color:#222;font-weight:bold;transform:scaleX(0.8992);">1</span>
<div style="left:542.7px;top:176.4px;width:20.2px;height:11px;background:#f0f0f0;"></div>
<div style="left:545.4px;top:177.6px;width:13.6px;height:9px;background:#dcdcdc;border:1.1px solid #b2b2b2;box-sizing:border-box;border-radius:2.8px;"></div>
<svg class="a" style="left:548.9px;top:179.5px" width="6.6" height="5" viewBox="0 0 6.6 5"><path d="M0 2.5L2.9 0V1.6H6.6V3.4H2.9V5z" fill="#8c8c8c"/></svg>
<span class="t" style="left:585px;transform-origin:0 50%;top:177px;font-size:7.2px;line-height:10px;color:#333;transform:scaleX(0.9734);">精算明細</span>
<span class="t" style="left:646px;transform-origin:0 50%;top:177px;font-size:7.2px;line-height:10px;color:#222;transform:scaleX(0.9736);">消費税率種別</span>
<div style="left:736.4px;top:178.4px;width:13.8px;height:7.1px;background:#9fd4ee;border-radius:2px;"></div>
<span class="t" style="left:741.7px;transform-origin:0 50%;top:177.2px;font-size:6.8px;line-height:10px;color:#222;font-weight:bold;transform:scaleX(0.8992);">1</span>
<div style="left:542.7px;top:187.4px;width:20.2px;height:11px;background:#f0f0f0;"></div>
<div style="left:545.4px;top:188.6px;width:13.6px;height:9px;background:#dcdcdc;border:1.1px solid #b2b2b2;box-sizing:border-box;border-radius:2.8px;"></div>
<svg class="a" style="left:548.9px;top:190.5px" width="6.6" height="5" viewBox="0 0 6.6 5"><path d="M0 2.5L2.9 0V1.6H6.6V3.4H2.9V5z" fill="#8c8c8c"/></svg>
<span class="t" style="left:585px;transform-origin:0 50%;top:188px;font-size:7.2px;line-height:10px;color:#333;transform:scaleX(0.9734);">精算明細</span>
<span class="t" style="left:646px;transform-origin:0 50%;top:188px;font-size:7.2px;line-height:10px;color:#222;transform:scaleX(0.9734);">消費税率</span>
<div style="left:736.4px;top:189.4px;width:13.8px;height:7.1px;background:#9fd4ee;border-radius:2px;"></div>
<span class="t" style="left:741.7px;transform-origin:0 50%;top:188.2px;font-size:6.8px;line-height:10px;color:#222;font-weight:bold;transform:scaleX(0.8992);">1</span>
<div style="left:542.7px;top:198.4px;width:20.2px;height:11px;background:#f0f0f0;"></div>
<div style="left:545.4px;top:199.6px;width:13.6px;height:9px;background:#dcdcdc;border:1.1px solid #b2b2b2;box-sizing:border-box;border-radius:2.8px;"></div>
<svg class="a" style="left:548.9px;top:201.5px" width="6.6" height="5" viewBox="0 0 6.6 5"><path d="M0 2.5L2.9 0V1.6H6.6V3.4H2.9V5z" fill="#8c8c8c"/></svg>
<span class="t" style="left:585px;transform-origin:0 50%;top:199px;font-size:7.2px;line-height:10px;color:#333;transform:scaleX(0.9734);">精算明細</span>
<span class="t" style="left:646px;transform-origin:0 50%;top:199px;font-size:7.2px;line-height:10px;color:#222;transform:scaleX(0.9734);">明細金額</span>
<div style="left:736.4px;top:200.4px;width:13.8px;height:7.1px;background:#9fd4ee;border-radius:2px;"></div>
<span class="t" style="left:741.7px;transform-origin:0 50%;top:199.2px;font-size:6.8px;line-height:10px;color:#222;font-weight:bold;transform:scaleX(0.8992);">3</span>
<div style="left:545.4px;top:210.6px;width:13.6px;height:9px;background:#fdfdfd;border:1.1px solid #a4a4a4;box-sizing:border-box;border-radius:2.8px;"></div>
<svg class="a" style="left:548.9px;top:212.5px" width="6.6" height="5" viewBox="0 0 6.6 5"><path d="M0 2.5L2.9 0V1.6H6.6V3.4H2.9V5z" fill="#000"/></svg>
<span class="t" style="left:585px;transform-origin:0 50%;top:210px;font-size:7.2px;line-height:10px;color:#333;transform:scaleX(0.9734);">精算明細</span>
<span class="t" style="left:646px;transform-origin:0 50%;top:210px;font-size:7.2px;line-height:10px;color:#222;transform:scaleX(0.9736);">明細報酬区分</span>
<div style="left:542.7px;top:220.4px;width:209.3px;height:11px;background:#e2f3fb;"></div>
<div style="left:545.4px;top:221.6px;width:13.6px;height:9px;background:#fdfdfd;border:1.1px solid #a4a4a4;box-sizing:border-box;border-radius:2.8px;"></div>
<svg class="a" style="left:548.9px;top:223.5px" width="6.6" height="5" viewBox="0 0 6.6 5"><path d="M0 2.5L2.9 0V1.6H6.6V3.4H2.9V5z" fill="#000"/></svg>
<span class="t" style="left:585px;transform-origin:0 50%;top:221px;font-size:7.2px;line-height:10px;color:#333;transform:scaleX(0.9734);">精算明細</span>
<span class="t" style="left:646px;transform-origin:0 50%;top:221px;font-size:7.2px;line-height:10px;color:#222;transform:scaleX(0.9736);">明細源泉予定額</span>
<div style="left:545.4px;top:232.6px;width:13.6px;height:9px;background:#fdfdfd;border:1.1px solid #a4a4a4;box-sizing:border-box;border-radius:2.8px;"></div>
<svg class="a" style="left:548.9px;top:234.5px" width="6.6" height="5" viewBox="0 0 6.6 5"><path d="M0 2.5L2.9 0V1.6H6.6V3.4H2.9V5z" fill="#000"/></svg>
<span class="t" style="left:585px;transform-origin:0 50%;top:232px;font-size:7.2px;line-height:10px;color:#333;transform:scaleX(0.9734);">精算明細</span>
<span class="t" style="left:646px;transform-origin:0 50%;top:232px;font-size:7.2px;line-height:10px;color:#222;transform:scaleX(0.9686);">債務伝票<b>No.</b></span>
<div style="left:545.4px;top:243.6px;width:13.6px;height:9px;background:#fdfdfd;border:1.1px solid #a4a4a4;box-sizing:border-box;border-radius:2.8px;"></div>
<svg class="a" style="left:548.9px;top:245.5px" width="6.6" height="5" viewBox="0 0 6.6 5"><path d="M0 2.5L2.9 0V1.6H6.6V3.4H2.9V5z" fill="#000"/></svg>
<span class="t" style="left:585px;transform-origin:0 50%;top:243px;font-size:7.2px;line-height:10px;color:#333;transform:scaleX(0.9734);">精算明細</span>
<span class="t" style="left:646px;transform-origin:0 50%;top:243px;font-size:7.2px;line-height:10px;color:#222;transform:scaleX(0.9732);">購入先</span>
<div style="left:542.7px;top:253.4px;width:209.3px;height:11px;background:#e6e6ec;"></div>
<div style="left:545.4px;top:254.6px;width:13.6px;height:9px;background:#dcdcdc;border:1.1px solid #b2b2b2;box-sizing:border-box;border-radius:2.8px;"></div>
<svg class="a" style="left:548.9px;top:256.5px" width="6.6" height="5" viewBox="0 0 6.6 5"><path d="M0 2.5L2.9 0V1.6H6.6V3.4H2.9V5z" fill="#8c8c8c"/></svg>
<span class="t" style="left:585px;transform-origin:0 50%;top:254px;font-size:7.2px;line-height:10px;color:#333;transform:scaleX(0.9734);">精算明細</span>
<span class="t" style="left:646px;transform-origin:0 50%;top:254px;font-size:7.2px;line-height:10px;color:#222;transform:scaleX(0.9734);">購入部門</span>
<div style="left:736.4px;top:255.4px;width:13.8px;height:7.1px;background:#9fd4ee;border-radius:2px;"></div>
<span class="t" style="left:741.7px;transform-origin:0 50%;top:254.2px;font-size:6.8px;line-height:10px;color:#222;font-weight:bold;transform:scaleX(0.8992);">1</span>
<div style="left:545.4px;top:265.6px;width:13.6px;height:9px;background:#fdfdfd;border:1.1px solid #a4a4a4;box-sizing:border-box;border-radius:2.8px;"></div>
<svg class="a" style="left:548.9px;top:267.5px" width="6.6" height="5" viewBox="0 0 6.6 5"><path d="M0 2.5L2.9 0V1.6H6.6V3.4H2.9V5z" fill="#000"/></svg>
<span class="t" style="left:585px;transform-origin:0 50%;top:265px;font-size:7.2px;line-height:10px;color:#333;transform:scaleX(0.9734);">精算明細</span>
<span class="t" style="left:646px;transform-origin:0 50%;top:265px;font-size:7.2px;line-height:10px;color:#222;transform:scaleX(0.9732);">担当者</span>
<div style="left:545.4px;top:276.6px;width:13.6px;height:9px;background:#fdfdfd;border:1.1px solid #a4a4a4;box-sizing:border-box;border-radius:2.8px;"></div>
<svg class="a" style="left:548.9px;top:278.5px" width="6.6" height="5" viewBox="0 0 6.6 5"><path d="M0 2.5L2.9 0V1.6H6.6V3.4H2.9V5z" fill="#000"/></svg>
<span class="t" style="left:585px;transform-origin:0 50%;top:276px;font-size:7.2px;line-height:10px;color:#333;transform:scaleX(0.9734);">精算明細</span>
<span class="t" style="left:646px;transform-origin:0 50%;top:276px;font-size:7.2px;line-height:10px;color:#222;transform:scaleX(0.9734);">購入科目</span>
<div style="left:545.4px;top:287.6px;width:13.6px;height:9px;background:#fdfdfd;border:1.1px solid #a4a4a4;box-sizing:border-box;border-radius:2.8px;"></div>
<svg class="a" style="left:548.9px;top:289.5px" width="6.6" height="5" viewBox="0 0 6.6 5"><path d="M0 2.5L2.9 0V1.6H6.6V3.4H2.9V5z" fill="#000"/></svg>
<span class="t" style="left:585px;transform-origin:0 50%;top:287px;font-size:7.2px;line-height:10px;color:#333;transform:scaleX(0.9734);">精算明細</span>
<span class="t" style="left:646px;transform-origin:0 50%;top:287px;font-size:7.2px;line-height:10px;color:#222;transform:scaleX(0.9736);">購入補助科目</span>
<div style="left:545.4px;top:298.6px;width:13.6px;height:9px;background:#fdfdfd;border:1.1px solid #a4a4a4;box-sizing:border-box;border-radius:2.8px;"></div>
<svg class="a" style="left:548.9px;top:300.5px" width="6.6" height="5" viewBox="0 0 6.6 5"><path d="M0 2.5L2.9 0V1.6H6.6V3.4H2.9V5z" fill="#000"/></svg>
<span class="t" style="left:585px;transform-origin:0 50%;top:298px;font-size:7.2px;line-height:10px;color:#333;transform:scaleX(0.9734);">精算明細</span>
<span class="t" style="left:646px;transform-origin:0 50%;top:298px;font-size:7.2px;line-height:10px;color:#222;transform:scaleX(0.9734);">購入摘要</span>
<div style="left:545.4px;top:309.6px;width:13.6px;height:9px;background:#fdfdfd;border:1.1px solid #a4a4a4;box-sizing:border-box;border-radius:2.8px;"></div>
<svg class="a" style="left:548.9px;top:311.5px" width="6.6" height="5" viewBox="0 0 6.6 5"><path d="M0 2.5L2.9 0V1.6H6.6V3.4H2.9V5z" fill="#000"/></svg>
<span class="t" style="left:585px;transform-origin:0 50%;top:309px;font-size:7.2px;line-height:10px;color:#333;transform:scaleX(0.9734);">精算明細</span>
<span class="t" style="left:646px;transform-origin:0 50%;top:309px;font-size:7.2px;line-height:10px;color:#222;transform:scaleX(0.9732);">精算先</span>
<div style="left:545.4px;top:320.6px;width:13.6px;height:9px;background:#fdfdfd;border:1.1px solid #a4a4a4;box-sizing:border-box;border-radius:2.8px;"></div>
<svg class="a" style="left:548.9px;top:322.5px" width="6.6" height="5" viewBox="0 0 6.6 5"><path d="M0 2.5L2.9 0V1.6H6.6V3.4H2.9V5z" fill="#000"/></svg>
<span class="t" style="left:585px;transform-origin:0 50%;top:320px;font-size:7.2px;line-height:10px;color:#333;transform:scaleX(0.9734);">精算明細</span>
<span class="t" style="left:646px;transform-origin:0 50%;top:320px;font-size:7.2px;line-height:10px;color:#222;transform:scaleX(0.9734);">債務部門</span>
<div style="left:545.4px;top:331.6px;width:13.6px;height:9px;background:#fdfdfd;border:1.1px solid #a4a4a4;box-sizing:border-box;border-radius:2.8px;"></div>
<svg class="a" style="left:548.9px;top:333.5px" width="6.6" height="5" viewBox="0 0 6.6 5"><path d="M0 2.5L2.9 0V1.6H6.6V3.4H2.9V5z" fill="#000"/></svg>
<span class="t" style="left:585px;transform-origin:0 50%;top:331px;font-size:7.2px;line-height:10px;color:#333;transform:scaleX(0.9734);">精算明細</span>
<span class="t" style="left:646px;transform-origin:0 50%;top:331px;font-size:7.2px;line-height:10px;color:#222;transform:scaleX(0.9734);">債務科目</span>
<div style="left:545.4px;top:342.6px;width:13.6px;height:9px;background:#fdfdfd;border:1.1px solid #a4a4a4;box-sizing:border-box;border-radius:2.8px;"></div>
<svg class="a" style="left:548.9px;top:344.5px" width="6.6" height="5" viewBox="0 0 6.6 5"><path d="M0 2.5L2.9 0V1.6H6.6V3.4H2.9V5z" fill="#000"/></svg>
<span class="t" style="left:585px;transform-origin:0 50%;top:342px;font-size:7.2px;line-height:10px;color:#333;transform:scaleX(0.9734);">精算明細</span>
<span class="t" style="left:646px;transform-origin:0 50%;top:342px;font-size:7.2px;line-height:10px;color:#222;transform:scaleX(0.9736);">債務補助科目</span>
<div style="left:545.4px;top:353.6px;width:13.6px;height:9px;background:#fdfdfd;border:1.1px solid #a4a4a4;box-sizing:border-box;border-radius:2.8px;"></div>
<svg class="a" style="left:548.9px;top:355.5px" width="6.6" height="5" viewBox="0 0 6.6 5"><path d="M0 2.5L2.9 0V1.6H6.6V3.4H2.9V5z" fill="#000"/></svg>
<span class="t" style="left:585px;transform-origin:0 50%;top:353px;font-size:7.2px;line-height:10px;color:#333;transform:scaleX(0.9734);">精算明細</span>
<span class="t" style="left:646px;transform-origin:0 50%;top:353px;font-size:7.2px;line-height:10px;color:#222;transform:scaleX(0.9734);">債務摘要</span>
<div style="left:545.4px;top:364.6px;width:13.6px;height:9px;background:#fdfdfd;border:1.1px solid #a4a4a4;box-sizing:border-box;border-radius:2.8px;"></div>
<svg class="a" style="left:548.9px;top:366.5px" width="6.6" height="5" viewBox="0 0 6.6 5"><path d="M0 2.5L2.9 0V1.6H6.6V3.4H2.9V5z" fill="#000"/></svg>
<span class="t" style="left:585px;transform-origin:0 50%;top:364px;font-size:7.2px;line-height:10px;color:#333;transform:scaleX(0.9734);">精算明細</span>
<span class="t" style="left:646px;transform-origin:0 50%;top:364px;font-size:7.2px;line-height:10px;color:#222;transform:scaleX(0.9732);">付箋色</span>
<div style="left:545.4px;top:375.6px;width:13.6px;height:9px;background:#fdfdfd;border:1.1px solid #a4a4a4;box-sizing:border-box;border-radius:2.8px;"></div>
<svg class="a" style="left:548.9px;top:377.5px" width="6.6" height="5" viewBox="0 0 6.6 5"><path d="M0 2.5L2.9 0V1.6H6.6V3.4H2.9V5z" fill="#000"/></svg>
<span class="t" style="left:585px;transform-origin:0 50%;top:375px;font-size:7.2px;line-height:10px;color:#333;transform:scaleX(0.9734);">精算明細</span>
<span class="t" style="left:646px;transform-origin:0 50%;top:375px;font-size:7.2px;line-height:10px;color:#222;transform:scaleX(0.9734);">付箋メモ</span>
<svg class="a" style="left:570.2px;top:389.7px" width="3.4" height="3.4" viewBox="0 0 3.4 3.4"><path d="M3.4 0V3.4H0z" fill="#222"/></svg>
<span class="t" style="left:577px;transform-origin:0 50%;top:386px;font-size:7.2px;line-height:10px;color:#222;transform:scaleX(0.9734);">証憑項目</span>
<div style="left:545.4px;top:397.6px;width:13.6px;height:9px;background:#fdfdfd;border:1.1px solid #a4a4a4;box-sizing:border-box;border-radius:2.8px;"></div>
<svg class="a" style="left:548.9px;top:399.5px" width="6.6" height="5" viewBox="0 0 6.6 5"><path d="M0 2.5L2.9 0V1.6H6.6V3.4H2.9V5z" fill="#000"/></svg>
<span class="t" style="left:585px;transform-origin:0 50%;top:397px;font-size:7.2px;line-height:10px;color:#333;transform:scaleX(0.9734);">証憑項目</span>
<span class="t" style="left:646px;transform-origin:0 50%;top:397px;font-size:7.2px;line-height:10px;color:#222;transform:scaleX(0.9734);">登録番号</span>
<div style="left:736.4px;top:398.4px;width:13.8px;height:7.1px;background:#9fd4ee;border-radius:2px;"></div>
<span class="t" style="left:741.7px;transform-origin:0 50%;top:397.2px;font-size:6.8px;line-height:10px;color:#222;font-weight:bold;transform:scaleX(0.8992);">1</span>
<div style="left:542.7px;top:153.9px;width:209.3px;height:1px;background:rgba(60,60,60,.12);"></div>
<div style="left:542.7px;top:164.9px;width:209.3px;height:1px;background:rgba(60,60,60,.12);"></div>
<div style="left:542.7px;top:175.9px;width:209.3px;height:1px;background:rgba(60,60,60,.12);"></div>
<div style="left:542.7px;top:186.9px;width:209.3px;height:1px;background:rgba(60,60,60,.12);"></div>
<div style="left:542.7px;top:197.9px;width:209.3px;height:1px;background:rgba(60,60,60,.12);"></div>
<div style="left:542.7px;top:208.9px;width:209.3px;height:1px;background:rgba(60,60,60,.12);"></div>
<div style="left:542.7px;top:219.9px;width:209.3px;height:1px;background:rgba(60,60,60,.12);"></div>
<div style="left:542.7px;top:230.9px;width:209.3px;height:1px;background:rgba(60,60,60,.12);"></div>
<div style="left:542.7px;top:241.9px;width:209.3px;height:1px;background:rgba(60,60,60,.12);"></div>
<div style="left:542.7px;top:252.9px;width:209.3px;height:1px;background:rgba(60,60,60,.12);"></div>
<div style="left:542.7px;top:263.9px;width:209.3px;height:1px;background:rgba(60,60,60,.12);"></div>
<div style="left:542.7px;top:274.9px;width:209.3px;height:1px;background:rgba(60,60,60,.12);"></div>
<div style="left:542.7px;top:285.9px;width:209.3px;height:1px;background:rgba(60,60,60,.12);"></div>
<div style="left:542.7px;top:296.9px;width:209.3px;height:1px;background:rgba(60,60,60,.12);"></div>
<div style="left:542.7px;top:307.9px;width:209.3px;height:1px;background:rgba(60,60,60,.12);"></div>
<div style="left:542.7px;top:318.9px;width:209.3px;height:1px;background:rgba(60,60,60,.12);"></div>
<div style="left:542.7px;top:329.9px;width:209.3px;height:1px;background:rgba(60,60,60,.12);"></div>
<div style="left:542.7px;top:340.9px;width:209.3px;height:1px;background:rgba(60,60,60,.12);"></div>
<div style="left:542.7px;top:351.9px;width:209.3px;height:1px;background:rgba(60,60,60,.12);"></div>
<div style="left:542.7px;top:362.9px;width:209.3px;height:1px;background:rgba(60,60,60,.12);"></div>
<div style="left:542.7px;top:373.9px;width:209.3px;height:1px;background:rgba(60,60,60,.12);"></div>
<div style="left:542.7px;top:384.9px;width:209.3px;height:1px;background:rgba(60,60,60,.12);"></div>
<div style="left:542.7px;top:395.9px;width:209.3px;height:1px;background:rgba(60,60,60,.12);"></div>
<div style="left:542.7px;top:406.9px;width:209.3px;height:1px;background:rgba(60,60,60,.12);"></div>
<div style="left:562.4px;top:143.4px;width:1px;height:264px;background:rgba(60,60,60,.12);"></div>
<div style="left:641.4px;top:143.4px;width:1px;height:264px;background:rgba(60,60,60,.12);"></div>
<div style="left:542.2px;top:132.7px;width:1px;height:274.7px;background:#d6d6d6;"></div>
<div style="left:751.5px;top:132.7px;width:1px;height:274.7px;background:#d6d6d6;"></div>
<div style="left:752.4px;top:144px;width:8.6px;height:263.4px;background:#f0f0f0;"></div>
<svg class="a" style="left:754.6px;top:147px" width="4.2" height="2.6" viewBox="0 0 4.2 2.6"><path d="M.3 2.3L2.1.4 3.9 2.3" stroke="#8a8a8a" stroke-width=".8" fill="none"/></svg>
<svg class="a" style="left:754.6px;top:402.4px" width="4.2" height="2.6" viewBox="0 0 4.2 2.6"><path d="M.3 .3L2.1 2.2 3.9 .3" stroke="#707070" stroke-width=".85" fill="none"/></svg>
<div style="left:752.6px;top:267.9px;width:8.4px;height:57.7px;background:#c9c9c9;"></div>
<div style="left:1px;top:424.6px;width:775px;height:25px;background:#fbfbfb;"></div>
<div style="left:1.4px;top:428.1px;width:61.3px;height:19.3px;background:#f0f0f0;border:1px solid #bcbcbc;border-top-color:#c8c8c8;border-bottom:1px solid #fbfbfb;box-sizing:border-box;border-radius:2.5px;box-shadow:0 1.5px 0 #a9a49e;"></div>
<div style="left:25.95px;top:430.2px;width:12.2px;height:6.2px;border:.8px solid #dcdcdc;border-bottom:none;box-sizing:border-box;background:#f5f5f5;"></div>
<span class="t" style="left:32.05px;transform-origin:0 50%;top:428.4px;font-size:5.9px;line-height:10px;color:#2a2a2a;transform:translateX(-50%);font-weight:bold;">F1</span>
<span class="t" style="left:32.05px;transform-origin:0 50%;top:437.6px;font-size:7.2px;line-height:10px;color:#222;transform:translateX(-50%);">ヘルプ</span>
<div style="left:65.6px;top:428.1px;width:61.3px;height:19.3px;background:#f0f0f0;border:1px solid #bcbcbc;border-top-color:#c8c8c8;border-bottom:1px solid #fbfbfb;box-sizing:border-box;border-radius:2.5px;box-shadow:0 1.5px 0 #a9a49e;"></div>
<div style="left:90.15px;top:430.2px;width:12.2px;height:6.4px;border:.9px solid #d0d0d0;border-bottom:none;box-sizing:border-box;background:#f3f3f3;"></div>
<div style="left:129.9px;top:428.1px;width:61.3px;height:19.3px;background:#f0f0f0;border:1px solid #bcbcbc;border-top-color:#c8c8c8;border-bottom:1px solid #fbfbfb;box-sizing:border-box;border-radius:2.5px;box-shadow:0 1.5px 0 #a9a49e;"></div>
<div style="left:154.45px;top:430.2px;width:12.2px;height:6.4px;border:.9px solid #d0d0d0;border-bottom:none;box-sizing:border-box;background:#f3f3f3;"></div>
<div style="left:194.1px;top:428.1px;width:61.3px;height:19.3px;background:#f0f0f0;border:1px solid #bcbcbc;border-top-color:#c8c8c8;border-bottom:1px solid #fbfbfb;box-sizing:border-box;border-radius:2.5px;box-shadow:0 1.5px 0 #a9a49e;"></div>
<div style="left:218.65px;top:430.2px;width:12.2px;height:6.4px;border:.9px solid #d0d0d0;border-bottom:none;box-sizing:border-box;background:#f3f3f3;"></div>
<div style="left:261.9px;top:428.1px;width:61.3px;height:19.3px;background:#f0f0f0;border:1px solid #bcbcbc;border-top-color:#c8c8c8;border-bottom:1px solid #fbfbfb;box-sizing:border-box;border-radius:2.5px;box-shadow:0 1.5px 0 #a9a49e;"></div>
<div style="left:286.45px;top:430.2px;width:12.2px;height:6.4px;border:.9px solid #d0d0d0;border-bottom:none;box-sizing:border-box;background:#f3f3f3;"></div>
<div style="left:326.1px;top:428.1px;width:61.3px;height:19.3px;background:#f0f0f0;border:1px solid #bcbcbc;border-top-color:#c8c8c8;border-bottom:1px solid #fbfbfb;box-sizing:border-box;border-radius:2.5px;box-shadow:0 1.5px 0 #a9a49e;"></div>
<div style="left:350.65px;top:430.2px;width:12.2px;height:6.2px;border:.8px solid #dcdcdc;border-bottom:none;box-sizing:border-box;background:#f5f5f5;"></div>
<span class="t" style="left:356.75px;transform-origin:0 50%;top:428.4px;font-size:5.9px;line-height:10px;color:#2a2a2a;transform:translateX(-50%);font-weight:bold;">F6</span>
<span class="t" style="left:356.75px;transform-origin:0 50%;top:437.6px;font-size:7.2px;line-height:10px;color:#222;transform:translateX(-50%);">変換設定</span>
<div style="left:390.3px;top:428.1px;width:61.3px;height:19.3px;background:#f0f0f0;border:1px solid #bcbcbc;border-top-color:#c8c8c8;border-bottom:1px solid #fbfbfb;box-sizing:border-box;border-radius:2.5px;box-shadow:0 1.5px 0 #a9a49e;"></div>
<div style="left:414.85px;top:430.2px;width:12.2px;height:6.4px;border:.9px solid #d0d0d0;border-bottom:none;box-sizing:border-box;background:#f3f3f3;"></div>
<div style="left:454.5px;top:428.1px;width:61.3px;height:19.3px;background:#f0f0f0;border:1px solid #bcbcbc;border-top-color:#c8c8c8;border-bottom:1px solid #fbfbfb;box-sizing:border-box;border-radius:2.5px;box-shadow:0 1.5px 0 #a9a49e;"></div>
<div style="left:479.05px;top:430.2px;width:12.2px;height:6.2px;border:.8px solid #dcdcdc;border-bottom:none;box-sizing:border-box;background:#f5f5f5;"></div>
<span class="t" style="left:485.15px;transform-origin:0 50%;top:428.4px;font-size:5.9px;line-height:10px;color:#2a2a2a;transform:translateX(-50%);font-weight:bold;">F8</span>
<span class="t" style="left:485.15px;transform-origin:0 50%;top:437.6px;font-size:7.2px;line-height:10px;color:#222;transform:translateX(-50%);">精算伝票項目</span>
<div style="left:521.7px;top:428.1px;width:61.3px;height:19.3px;background:#f0f0f0;border:1px solid #bcbcbc;border-top-color:#c8c8c8;border-bottom:1px solid #fbfbfb;box-sizing:border-box;border-radius:2.5px;box-shadow:0 1.5px 0 #a9a49e;"></div>
<div style="left:546.25px;top:430.2px;width:12.2px;height:6.4px;border:.9px solid #d0d0d0;border-bottom:none;box-sizing:border-box;background:#f3f3f3;"></div>
<div style="left:585.9px;top:428.1px;width:61.3px;height:19.3px;background:#f0f0f0;border:1px solid #bcbcbc;border-top-color:#c8c8c8;border-bottom:1px solid #fbfbfb;box-sizing:border-box;border-radius:2.5px;box-shadow:0 1.5px 0 #a9a49e;"></div>
<div style="left:610.45px;top:430.2px;width:12.2px;height:6.2px;border:.8px solid #dcdcdc;border-bottom:none;box-sizing:border-box;background:#f5f5f5;"></div>
<span class="t" style="left:616.55px;transform-origin:0 50%;top:428.4px;font-size:5.9px;line-height:10px;color:#2a2a2a;transform:translateX(-50%);font-weight:bold;">F10</span>
<span class="t" style="left:616.55px;transform-origin:0 50%;top:437.6px;font-size:7.2px;line-height:10px;color:#222;transform:translateX(-50%);">中止</span>
<div style="left:650.1px;top:428.1px;width:61.3px;height:19.3px;background:#f0f0f0;border:1px solid #bcbcbc;border-top-color:#c8c8c8;border-bottom:1px solid #fbfbfb;box-sizing:border-box;border-radius:2.5px;box-shadow:0 1.5px 0 #a9a49e;"></div>
<div style="left:674.65px;top:430.2px;width:12.2px;height:6.4px;border:.9px solid #d0d0d0;border-bottom:none;box-sizing:border-box;background:#f3f3f3;"></div>
<div style="left:714.3px;top:428.1px;width:61.3px;height:19.3px;background:#f0f0f0;border:1px solid #bcbcbc;border-top-color:#c8c8c8;border-bottom:1px solid #fbfbfb;box-sizing:border-box;border-radius:2.5px;box-shadow:0 1.5px 0 #a9a49e;"></div>
<div style="left:738.85px;top:430.2px;width:12.2px;height:6.2px;border:.8px solid #dcdcdc;border-bottom:none;box-sizing:border-box;background:#f5f5f5;"></div>
<span class="t" style="left:744.95px;transform-origin:0 50%;top:428.4px;font-size:5.9px;line-height:10px;color:#2a2a2a;transform:translateX(-50%);font-weight:bold;">F12</span>
<span class="t" style="left:744.95px;transform-origin:0 50%;top:437.6px;font-size:7.2px;line-height:10px;color:#222;transform:translateX(-50%);">登録</span>
<div style="left:258.2px;top:428px;width:0.8px;height:20px;background:#d0d0d0;"></div>
<div style="left:518.2px;top:428px;width:0.8px;height:20px;background:#d0d0d0;"></div>
<div style="left:1px;top:449.2px;width:775px;height:13.5px;background:#1f4e79;border-top:1px solid #0f3c6e;box-sizing:border-box;border-radius:0 0 4px 4px;"></div>
<svg class="a" style="left:315px;top:420px" width="85" height="40" viewBox="315 420 85 40"><rect x="321.95" y="424.85" width="69.8" height="27.8" rx="5" fill="none" stroke="#fa0000" stroke-width="3.3"/></svg>
</div>
</body></html>
